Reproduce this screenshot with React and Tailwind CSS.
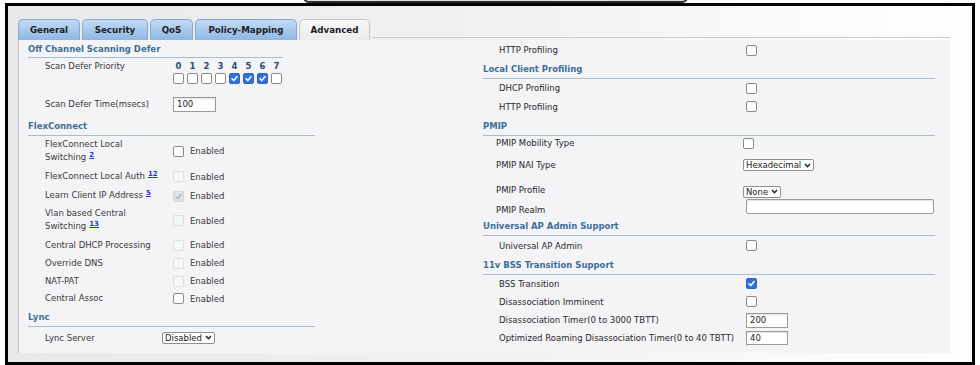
import React from 'react';

const Check = ({ color }) => (
  <svg viewBox="0 0 10 10" className="w-[9px] h-[9px]">
    <path d="M2.2 5.3 L4.2 7.3 L7.9 2.9" stroke={color} strokeWidth="1.7" fill="none" strokeLinecap="round" strokeLinejoin="round" />
  </svg>
);

const Cb = ({ state = 'off' }) => {
  if (state === 'on') {
    return (
      <div className="w-[11px] h-[11px] rounded-[2px] bg-[#2f72dc] border border-[#2a66c8] flex items-center justify-center">
        <Check color="#ffffff" />
      </div>
    );
  }
  if (state === 'disOn') {
    return (
      <div className="w-[11px] h-[11px] rounded-[2px] bg-[#e2e2e4] border border-[#d6d6d8] flex items-center justify-center">
        <Check color="#b4b4b8" />
      </div>
    );
  }
  if (state === 'dis') {
    return <div className="w-[11px] h-[11px] rounded-[2px] bg-[#f6f6f7] border border-[#dedee0]" />;
  }
  return <div className="w-[11px] h-[11px] rounded-[2px] bg-white border border-[#8a8a8e]" />;
};

const Chevron = () => (
  <svg viewBox="0 0 8 6" className="w-[7px] h-[5px]">
    <path d="M1 1.3 L4 4.5 L7 1.3" stroke="#1e1e1e" strokeWidth="1.7" fill="none" />
  </svg>
);

const Select = ({ children, className = '' }) => (
  <div className={`h-[12px] flex items-center gap-[3px] px-[2px] bg-white border border-[#8e8e92] rounded-[2px] text-[#222] ${className}`}>
    <span>{children}</span>
    <Chevron />
  </div>
);

const Input = ({ children, className = '' }) => (
  <div className={`flex items-center px-[3px] bg-white border border-[#9a9a9e] shadow-[inset_0_1px_1px_rgba(0,0,0,0.12)] text-[#222] ${className}`}>
    {children}
  </div>
);

const Heading = ({ children, className = '' }) => (
  <div className={`flex items-center border-b border-[#a9bccb] font-bold text-[#3b6f98] ${className}`}>{children}</div>
);

const Ref = ({ n }) => (
  <span className="relative -top-[3px] ml-[3px] text-[7px] font-bold text-[#2437d6] underline">{n}</span>
);

const EnabledRow = ({ h, label, state }) => (
  <div className={`flex items-center pl-[17px] ${h}`}>
    <div className="w-[128px] leading-[13px]">{label}</div>
    <div className="flex items-center gap-[6px]">
      <Cb state={state} />
      <span>Enabled</span>
    </div>
  </div>
);

const RightRow = ({ h, label, children, pl = 'pl-[16px]', align = 'items-center' }) => (
  <div className={`flex ${align} ${pl} ${h}`}>
    <div className="w-[247px] text-[#2a2a2a]">{label}</div>
    {children}
  </div>
);

export default function App() {
  const tabs = [
    { name: 'General', w: 'w-[62px]' },
    { name: 'Security', w: 'w-[66px]' },
    { name: 'QoS', w: 'w-[43px]' },
    { name: 'Policy-Mapping', w: 'w-[102px]' },
  ];
  const priorities = ['off', 'off', 'off', 'off', 'on', 'on', 'on', 'off'];

  return (
    <div className="relative w-[980px] h-[365px] overflow-hidden bg-white font-['DejaVu_Sans',sans-serif] text-[8.5px] leading-[12px] text-[#3a3a3a]">
      <div className="ml-[5px] mt-[3px] w-[970px] h-[362px] border-[3px] border-black bg-gradient-to-r from-[#e9e9eb] via-[#f1f1f2] to-white pl-[10px] pt-[13px]">
        {/* tabs */}
        <div className="flex items-end h-[21px] gap-[2px]">
          {tabs.map((t) => (
            <div
              key={t.name}
              className={`${t.w} h-[21px] flex items-center justify-center rounded-t-[5px] border border-b-0 border-[#86a7cc] bg-gradient-to-b from-[#c3dbf4] to-[#8fb7e3] font-bold text-[8.7px] text-[#1b1b1b]`}
            >
              {t.name}
            </div>
          ))}
          <div className="w-[71px] h-[21px] flex items-center justify-center rounded-t-[5px] border border-b-0 border-[#c4c4c6] bg-gradient-to-b from-[#f7f7f8] to-[#ececee] font-bold text-[8.7px] text-[#1b1b1b]">
            Advanced
          </div>
          <div className="flex-1 self-start h-[19px] border-b border-[#cbcbcd] mr-[22px]" />
        </div>

        {/* panel */}
        <div className="flex w-[932px] h-[313px] border-l border-[#c6c6c8] bg-[#f4f3f6]">
          {/* left column */}
          <div className="w-[464px] pl-[9px]">
            <Heading className="w-[255px] h-[18px]">Off Channel Scanning Defer</Heading>
            <div className="flex h-[31px] pl-[17px]">
              <div className="w-[128px] pt-[2px]">Scan Defer Priority</div>
              <div className="pt-[2px]">
                <div className="flex gap-[3px] h-[12px] font-bold text-[#2e4d70]">
                  {priorities.map((_, i) => (
                    <span key={i} className="w-[11px] text-center">{i}</span>
                  ))}
                </div>
                <div className="flex gap-[3px] mt-[1px]">
                  {priorities.map((s, i) => (
                    <Cb key={i} state={s} />
                  ))}
                </div>
              </div>
            </div>
            <div className="flex items-center h-[30px] pl-[17px]">
              <div className="w-[128px]">Scan Defer Time(msecs)</div>
              <Input className="w-[43px] h-[15px]">100</Input>
            </div>
            <Heading className="w-[287px] h-[17px] pb-[2px]">FlexConnect</Heading>
            <EnabledRow
              h="h-[30px]"
              state="off"
              label={<>FlexConnect Local<br />Switching<Ref n="2" /></>}
            />
            <EnabledRow h="h-[21px]" state="dis" label={<>FlexConnect Local Auth<Ref n="12" /></>} />
            <EnabledRow h="h-[18px]" state="disOn" label={<>Learn Client IP Address<Ref n="5" /></>} />
            <EnabledRow
              h="h-[31px]"
              state="dis"
              label={<>Vlan based Central<br />Switching<Ref n="13" /></>}
            />
            <EnabledRow h="h-[18px]" state="dis" label="Central DHCP Processing" />
            <EnabledRow h="h-[18px]" state="dis" label="Override DNS" />
            <EnabledRow h="h-[18px]" state="dis" label="NAT-PAT" />
            <EnabledRow h="h-[17px]" state="off" label="Central Assoc" />
            <Heading className="w-[287px] h-[20px]">Lync</Heading>
            <div className="flex items-center h-[21px] pl-[17px]">
              <div className="w-[117px]">Lync Server</div>
              <Select>Disabled</Select>
            </div>
          </div>

          {/* right column */}
          <div className="w-[452px]">
            <RightRow h="h-[20px]" label="HTTP Profiling">
              <Cb />
            </RightRow>
            <Heading className="h-[19px]">Local Client Profiling</Heading>
            <RightRow h="h-[18px]" label="DHCP Profiling">
              <Cb />
            </RightRow>
            <RightRow h="h-[19px]" label="HTTP Profiling">
              <Cb />
            </RightRow>
            <Heading className="h-[20px]">PMIP</Heading>
            <RightRow h="h-[14px]" pl="pl-[13px]" label="PMIP Mobility Type">
              <Cb />
            </RightRow>
            <RightRow h="h-[30px]" pl="pl-[13px]" label="PMIP NAI Type">
              <Select>Hexadecimal</Select>
            </RightRow>
            <RightRow h="h-[19px]" pl="pl-[13px]" label="PMIP Profile">
              <Select className="mt-[4px]">None</Select>
            </RightRow>
            <div className="flex items-start h-[18px] pl-[13px]">
              <div className="w-[250px] pt-[5px] text-[#2a2a2a]">PMIP Realm</div>
              <Input className="w-[188px] h-[15px] rounded-[2px]" />
            </div>
            <Heading className="h-[19px]">Universal AP Admin Support</Heading>
            <RightRow h="h-[19px]" label="Universal AP Admin">
              <Cb />
            </RightRow>
            <Heading className="h-[20px]">11v BSS Transition Support</Heading>
            <RightRow h="h-[17px]" label="BSS Transition">
              <Cb state="on" />
            </RightRow>
            <RightRow h="h-[19px]" label="Disassociation Imminent">
              <Cb />
            </RightRow>
            <RightRow h="h-[18px]" label="Disassociation Timer(0 to 3000 TBTT)">
              <Input className="w-[42px] h-[15px]">200</Input>
            </RightRow>
            <RightRow h="h-[17px]" label="Optimized Roaming Disassociation Timer(0 to 40 TBTT)">
              <Input className="w-[42px] h-[14px]">40</Input>
            </RightRow>
          </div>
        </div>
      </div>
      {/* edge of the dialog lying above the frame */}
      <div className="absolute left-[303px] top-[-13px] w-[385px] h-[16px] rounded-b-[6px] border-2 border-[#2a2a2a] bg-[#d9e4ec]" />
    </div>
  );
}
